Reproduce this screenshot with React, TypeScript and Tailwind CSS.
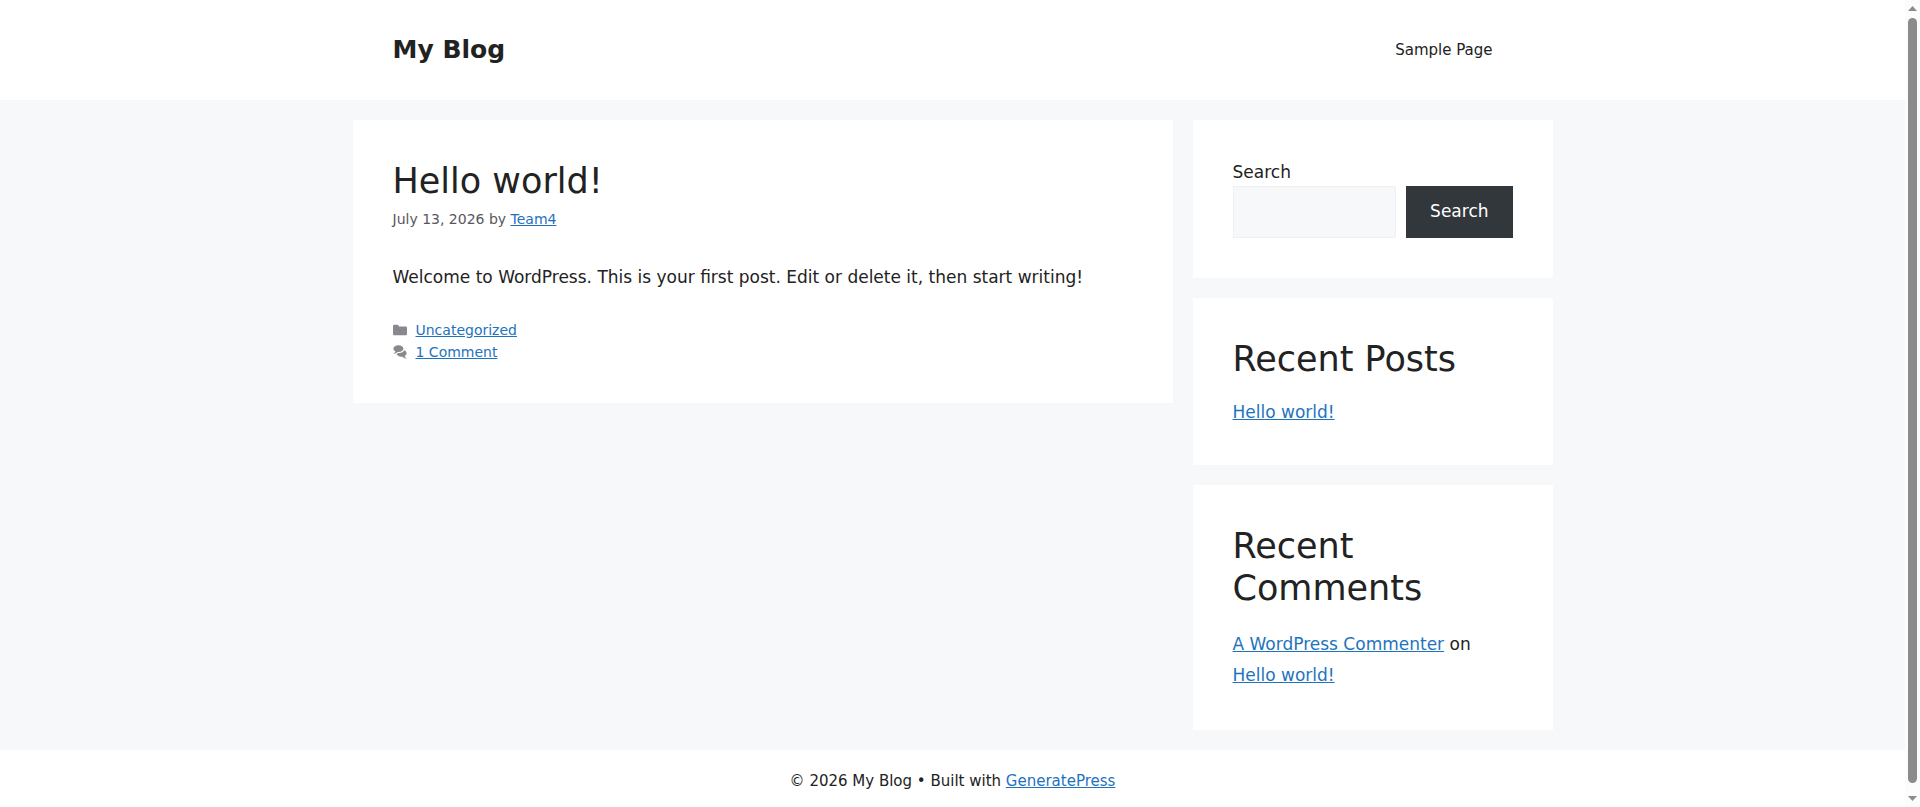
import type { ReactNode } from "react";

function TextLink({ children }: { children: ReactNode }) {
  return (
    <a href="#" className="text-[#1e73be] underline hover:text-black">
      {children}
    </a>
  );
}

function Card({ children }: { children: ReactNode }) {
  return <section className="bg-white p-10">{children}</section>;
}

function WidgetTitle({ children }: { children: ReactNode }) {
  return <h2 className="mb-5 text-[35px] leading-[42px]">{children}</h2>;
}

function FolderIcon() {
  return (
    <svg viewBox="0 0 512 512" className="size-3.5 fill-current opacity-70" aria-hidden="true">
      <path d="M0 112c0-26.51 21.49-48 48-48h110.014a48 48 0 0143.592 27.907l12.349 26.791A16 16 0 00228.486 128H464c26.51 0 48 21.49 48 48v224c0 26.51-21.49 48-48 48H48c-26.51 0-48-21.49-48-48V112z" />
    </svg>
  );
}

function CommentsIcon() {
  return (
    <svg viewBox="0 0 512 512" className="size-3.5 fill-current opacity-70" aria-hidden="true">
      <path d="M132.838 329.973a435.298 435.298 0 0016.769-9.004c13.363-7.574 26.587-16.142 37.419-25.507 7.544.597 15.27.925 23.098.925 54.905 0 105.634-15.311 143.285-41.28 23.728-16.365 43.115-37.692 54.155-62.645 54.739 22.205 91.498 63.272 91.498 110.286 0 42.186-29.558 79.498-75.09 102.828 23.46 49.216 75.09 101.709 75.09 101.709s-115.837-38.35-154.424-78.46c-9.956 1.12-20.297 1.758-30.793 1.758-88.727 0-162.927-43.071-181.007-100.61z" />
      <path d="M383.371 132.502c0 70.603-82.961 127.787-185.216 127.787-10.496 0-20.837-.639-30.793-1.757-38.587 40.093-154.424 78.42-154.424 78.42s51.63-52.472 75.09-101.67c-45.532-23.321-75.09-60.619-75.09-102.79C12.938 61.9 95.9 4.716 198.155 4.716 300.41 4.715 383.37 61.9 383.37 132.502z" />
    </svg>
  );
}

function ScrollTrack() {
  return (
    <div aria-hidden="true" className="flex w-[15px] shrink-0 flex-col items-center bg-[#fcfcfc] py-1.5">
      <svg viewBox="0 0 9 5" className="h-[5px] w-[9px] fill-[#8b8b8b]">
        <path d="M4.5 0L9 5H0z" />
      </svg>
      <div className="mt-[7px] mb-[13px] w-[9px] flex-1 rounded-full bg-[#8b8b8b]" />
      <svg viewBox="0 0 9 5" className="h-[5px] w-[9px] fill-[#8b8b8b]">
        <path d="M0 0h9L4.5 5z" />
      </svg>
    </div>
  );
}

export default function App() {
  return (
    <div className="flex h-screen font-['DejaVu_Sans',sans-serif] text-[17px] leading-normal text-[#222222]">
      <div className="min-w-0 flex-1 overflow-y-auto bg-[#f7f8f9] [scrollbar-width:none]">
        <header className="bg-white">
          <div className="mx-auto flex max-w-[1200px] items-center justify-between px-10 py-5">
            <a href="#" className="text-[25px] leading-[30px] font-bold">
              My Blog
            </a>
            <nav>
              <a href="#" className="block px-5 text-[15px] leading-[60px]">
                Sample Page
              </a>
            </nav>
          </div>
        </header>

        <div className="mx-auto flex max-w-[1200px] flex-col gap-5 py-5 md:flex-row md:items-start">
          <main className="min-w-0 flex-1">
            <article className="bg-white p-10">
              <h1 className="text-[35px] leading-[42px]">Hello world!</h1>
              <p className="mt-1.5 text-[14px] leading-[22px] text-[#575760]">
                July 13, 2026 by <TextLink>Team4</TextLink>
              </p>
              <p className="mt-[35px]">
                Welcome to WordPress. This is your first post. Edit or delete it, then start writing!
              </p>
              <footer className="mt-7 text-[14px] leading-[22px] text-[#575760]">
                <div className="flex items-center gap-[9px]">
                  <FolderIcon />
                  <TextLink>Uncategorized</TextLink>
                </div>
                <div className="flex items-center gap-[9px]">
                  <CommentsIcon />
                  <TextLink>1 Comment</TextLink>
                </div>
              </footer>
            </article>
          </main>

          <aside className="flex shrink-0 flex-col gap-5 md:w-[360px]">
            <Card>
              <form onSubmit={(event) => event.preventDefault()}>
                <label htmlFor="search" className="block">
                  Search
                </label>
                <div className="flex gap-2.5">
                  <input
                    id="search"
                    type="search"
                    className="h-[52px] min-w-0 flex-1 border border-[#f0f0f0] bg-[#f7f8f9] px-2"
                  />
                  <button type="submit" className="h-[52px] bg-[#32373c] px-6 text-white">
                    Search
                  </button>
                </div>
              </form>
            </Card>
            <Card>
              <WidgetTitle>Recent Posts</WidgetTitle>
              <ul>
                <li>
                  <TextLink>Hello world!</TextLink>
                </li>
              </ul>
            </Card>
            <Card>
              <WidgetTitle>Recent Comments</WidgetTitle>
              <ol className="leading-[1.8]">
                <li>
                  <TextLink>A WordPress Commenter</TextLink> on <TextLink>Hello world!</TextLink>
                </li>
              </ol>
            </Card>
          </aside>
        </div>

        <footer className="bg-white p-5 text-center text-[15px]">
          © 2026 My Blog • Built with <TextLink>GeneratePress</TextLink>
        </footer>
      </div>
      <ScrollTrack />
    </div>
  );
}
